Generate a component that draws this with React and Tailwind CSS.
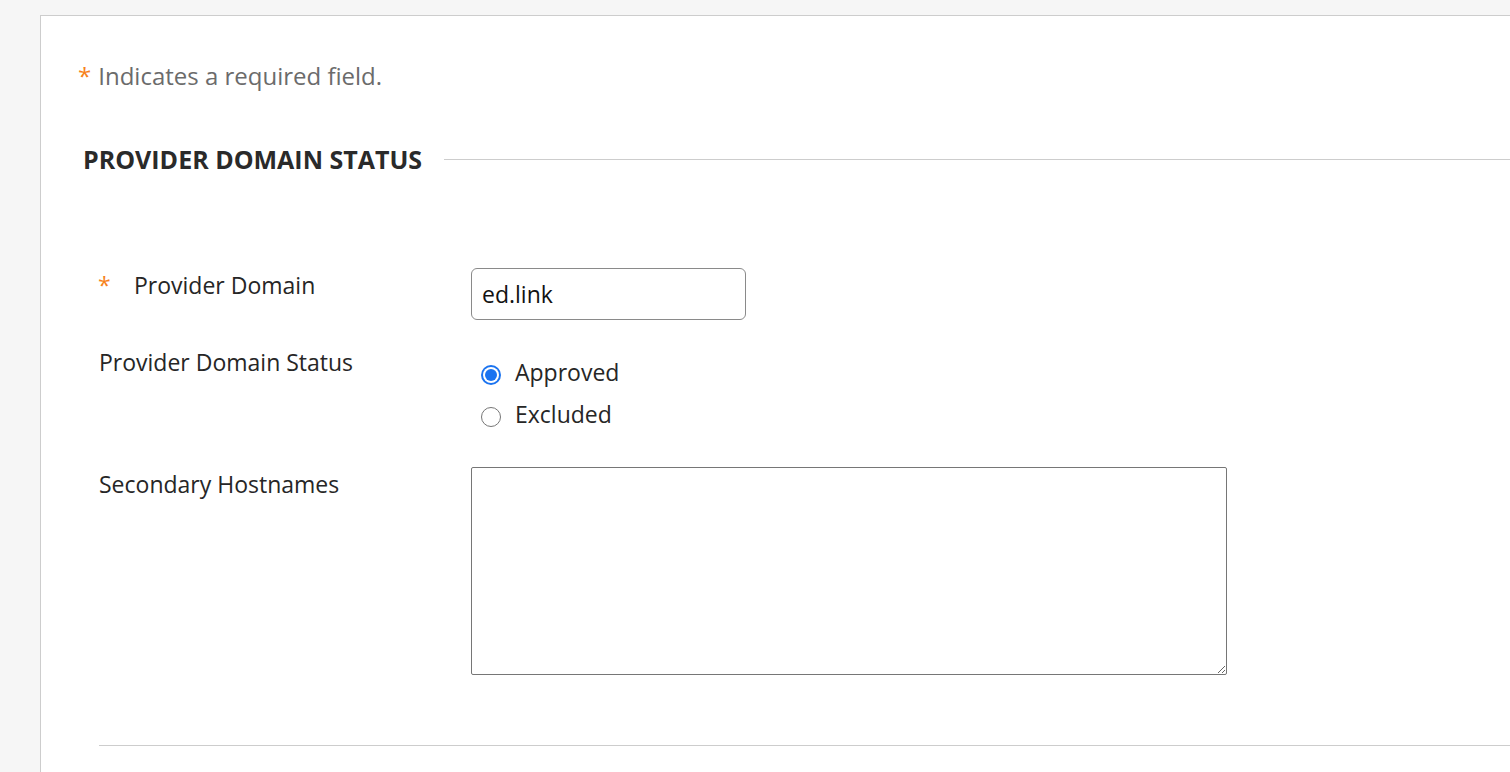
const font = { fontFamily: '"Open Sans", "Liberation Sans", sans-serif' }

const Radio = ({ checked, label }) => {
    return (
        <label className="flex items-center h-[42px]">
            {checked ? (
                <span className="w-5 h-5 rounded-full bg-[#1a73f0] flex items-center justify-center">
                    <span className="w-4 h-4 rounded-full bg-white flex items-center justify-center">
                        <span className="w-3 h-3 rounded-full bg-[#1a73f0]"></span>
                    </span>
                </span>
            ) : (
                <span className="w-5 h-5 rounded-full border-[1.5px] border-[#767676] bg-white"></span>
            )}
            <span className="ml-[14px] text-[23px] leading-[30px] text-[#262626] -mt-[6px]">{label}</span>
        </label>
    )
}

const App = () => {
    return (
        <div className="min-h-screen bg-[#f6f6f6] pt-[15px] pl-10" style={font}>
            <div className="bg-white border-t border-l border-[#cdcdcd] h-[757px] overflow-hidden">
                <p className="pl-[37px] pt-[45px] text-[24px] leading-[30px] text-[#6b6b6b]">
                    <span className="text-[#f7821b] mr-[7px]">*</span>Indicates a required field.
                </p>

                <div className="flex items-center mt-[53px] pl-[42px]">
                    <h2 className="text-[25px] font-bold text-[#2a2a2a] leading-[30px] whitespace-nowrap">PROVIDER DOMAIN STATUS</h2>
                    <div className="flex-1 ml-[22px] h-px bg-[#cdcdcd]"></div>
                </div>

                <div className="pl-[58px] mt-[94px]">
                    <div className="flex">
                        <div className="w-[372px] flex items-start leading-[30px] pt-[2px]">
                            <span className="text-[23px] text-[#f7821b] w-[36px] -ml-[1px]">*</span>
                            <span className="text-[23px] text-[#262626]">Provider Domain</span>
                        </div>
                        <input
                            type="text"
                            defaultValue="ed.link"
                            className="w-[275px] h-[52px] border border-[#8a8a8a] rounded-[6px] px-[10px] text-[23px] text-[#111] outline-none"
                        />
                    </div>

                    <div className="flex mt-[27px]">
                        <div className="w-[372px] text-[23px] text-[#262626] leading-[30px]">Provider Domain Status</div>
                        <div className="flex flex-col pt-[7px] pl-[10px]">
                            <Radio checked label="Approved" />
                            <Radio label="Excluded" />
                        </div>
                    </div>

                    <div className="flex mt-[29px]">
                        <div className="w-[372px] text-[23px] text-[#262626] leading-[30px] pt-[2px]">Secondary Hostnames</div>
                        <textarea className="w-[756px] h-[208px] border border-[#767676] rounded-[2px] outline-none resize" />
                    </div>

                    <div className="mt-[70px] h-px bg-[#cdcdcd]"></div>
                </div>
            </div>
        </div>
    )
}

export default App
